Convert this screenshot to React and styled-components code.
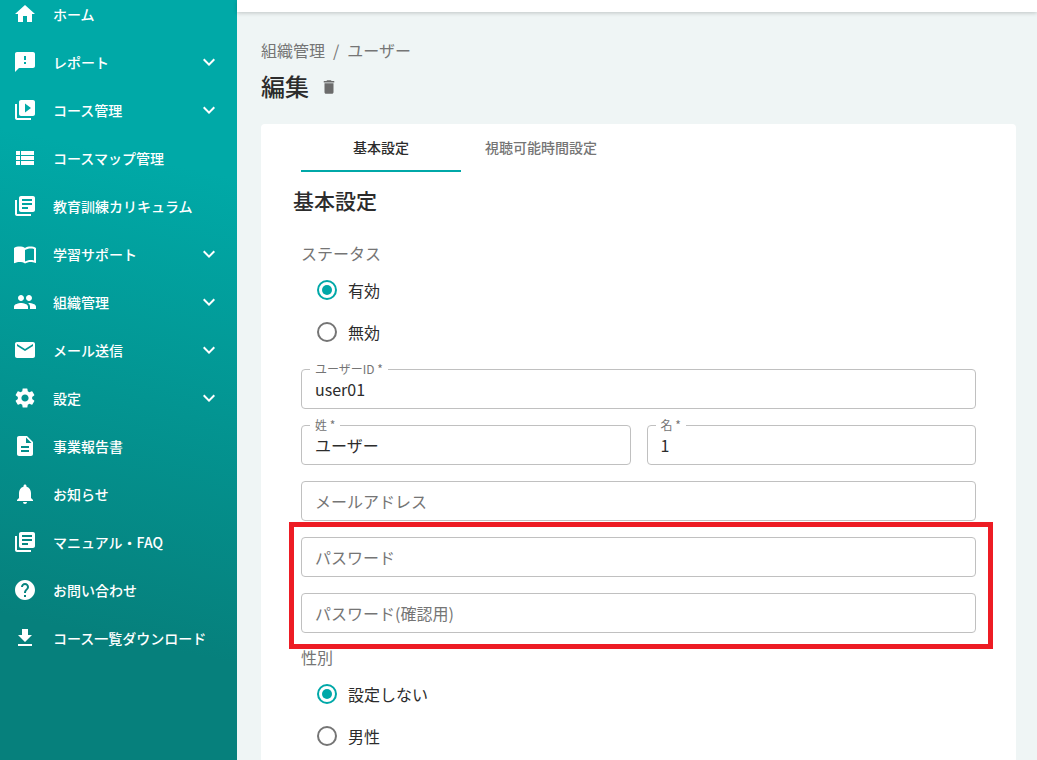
import React, { useState } from "react"
import styled, { createGlobalStyle } from "styled-components"
import {
  MdHome,
  MdFeedback,
  MdVideoLibrary,
  MdViewList,
  MdLibraryBooks,
  MdImportContacts,
  MdPeople,
  MdEmail,
  MdSettings,
  MdDescription,
  MdNotifications,
  MdHelp,
  MdGetApp,
  MdExpandMore,
  MdDelete,
} from "react-icons/md"

const navItems = [
  { label: "ホーム", icon: MdHome },
  { label: "レポート", icon: MdFeedback, expandable: true },
  { label: "コース管理", icon: MdVideoLibrary, expandable: true },
  { label: "コースマップ管理", icon: MdViewList },
  { label: "教育訓練カリキュラム", icon: MdLibraryBooks },
  { label: "学習サポート", icon: MdImportContacts, expandable: true },
  { label: "組織管理", icon: MdPeople, expandable: true },
  { label: "メール送信", icon: MdEmail, expandable: true },
  { label: "設定", icon: MdSettings, expandable: true },
  { label: "事業報告書", icon: MdDescription },
  { label: "お知らせ", icon: MdNotifications },
  { label: "マニュアル・FAQ", icon: MdLibraryBooks },
  { label: "お問い合わせ", icon: MdHelp },
  { label: "コース一覧ダウンロード", icon: MdGetApp },
]

const tabs = ["基本設定", "視聴可能時間設定"]

const NavItem = ({ label, icon: Icon, expandable }) => {
  const content = (
    <>
      <Icon size={24} />
      <NavLabel>{label}</NavLabel>
      {expandable && <MdExpandMore size={24} />}
    </>
  )

  return (
    <li>
      {expandable
        ? <NavRow as="button" type="button">{content}</NavRow>
        : <NavRow href="#">{content}</NavRow>}
    </li>
  )
}

const TextField = ({ id, label, type = "text", required, value, onChange }) => (
  <FieldWrapper>
    <FieldInput
      id={id}
      type={type}
      value={value}
      autoComplete="off"
      onChange={(e) => onChange(id, e.target.value)}
    />
    <FieldLabel htmlFor={id} $shrink={value !== ""}>
      {label}{required && " *"}
    </FieldLabel>
  </FieldWrapper>
)

const RadioField = ({ name, legend, options, value, onChange }) => (
  <RadioGroup>
    <RadioLegend>{legend}</RadioLegend>
    {options.map((option) => (
      <RadioLabel key={option}>
        <Radio
          type="radio"
          name={name}
          checked={value === option}
          onChange={() => onChange(name, option)}
        />
        {option}
      </RadioLabel>
    ))}
  </RadioGroup>
)

const App = () => {
  const [activeTab, setActiveTab] = useState(tabs[0])
  const [user, setUser] = useState({
    status: "有効",
    userId: "user01",
    lastName: "ユーザー",
    firstName: "1",
    email: "",
    password: "",
    passwordConfirm: "",
    gender: "設定しない",
  })

  const update = (key, value) => setUser({ ...user, [key]: value })

  return (
    <PageWrapper>
      <GlobalStyle />
      <Sidebar>
        <NavList>
          {navItems.map((item) => <NavItem key={item.label} {...item} />)}
        </NavList>
      </Sidebar>
      <Content>
        <TopBar />
        <Main>
          <Breadcrumbs>
            <BreadcrumbLink href="#">組織管理</BreadcrumbLink>
            <span>/</span>
            <BreadcrumbLink href="#">ユーザー</BreadcrumbLink>
          </Breadcrumbs>
          <TitleRow>
            <Title>編集</Title>
            <DeleteButton type="button" aria-label="削除">
              <MdDelete size={18} />
            </DeleteButton>
          </TitleRow>
          <Card>
            <TabList role="tablist">
              {tabs.map((tab) => (
                <Tab
                  key={tab}
                  type="button"
                  role="tab"
                  aria-selected={tab === activeTab}
                  $active={tab === activeTab}
                  onClick={() => setActiveTab(tab)}
                >
                  {tab}
                </Tab>
              ))}
            </TabList>
            <SectionTitle>基本設定</SectionTitle>
            <Form>
              <RadioField
                name="status"
                legend="ステータス"
                options={["有効", "無効"]}
                value={user.status}
                onChange={update}
              />
              <FieldStack>
                <TextField id="userId" label="ユーザーID" required value={user.userId} onChange={update} />
                <FieldRow>
                  <TextField id="lastName" label="姓" required value={user.lastName} onChange={update} />
                  <TextField id="firstName" label="名" required value={user.firstName} onChange={update} />
                </FieldRow>
                <TextField id="email" label="メールアドレス" value={user.email} onChange={update} />
                <HighlightedFields>
                  <TextField id="password" type="password" label="パスワード" value={user.password} onChange={update} />
                  <TextField id="passwordConfirm" type="password" label="パスワード(確認用)" value={user.passwordConfirm} onChange={update} />
                </HighlightedFields>
              </FieldStack>
              <RadioField
                name="gender"
                legend="性別"
                options={["設定しない", "男性"]}
                value={user.gender}
                onChange={update}
              />
            </Form>
          </Card>
        </Main>
      </Content>
    </PageWrapper>
  )
}

export default App


const GlobalStyle = createGlobalStyle`
  * {
    box-sizing: border-box;
  }

  body {
    margin: 0;
    color: #2c2c2c;
    font-family: "Noto Sans CJK JP", "Noto Sans", sans-serif;
    font-size: 16px;
    line-height: 24px;
  }

  button,
  input {
    font-family: inherit;
  }
`

const PageWrapper = styled.div`
  display: flex;
  min-height: 100vh;
`

const Sidebar = styled.nav`
  flex: 0 0 237px;
  color: #fff;
  background: linear-gradient(192deg, #00a9a7 22%, #06807c 82%);
`

const NavList = styled.ul`
  display: flex;
  flex-direction: column;
  gap: 20px;
  margin: 0;
  padding: 0;
  list-style: none;
`

const NavRow = styled.a`
  display: flex;
  align-items: center;
  gap: 16px;
  width: 100%;
  height: 28px;
  padding: 0 16px 0 13px;
  border: 0;
  background: none;
  color: inherit;
  font-size: 14px;
  font-weight: 500;
  line-height: 20px;
  text-align: left;
  text-decoration: none;
  cursor: pointer;

  svg {
    flex: none;
  }
`

const NavLabel = styled.span`
  flex: 1;
  white-space: nowrap;
`

const Content = styled.div`
  display: flex;
  flex: 1;
  flex-direction: column;
  min-width: 0;
  background: #eff5f5;
`

const TopBar = styled.header`
  height: 12px;
  background: #fff;
  box-shadow: 0 1px 4px rgba(0, 0, 0, 0.2);
`

const Main = styled.main`
  display: flex;
  flex: 1;
  flex-direction: column;
  padding: 26px 21px 0 24px;
`

const Breadcrumbs = styled.nav`
  display: flex;
  gap: 8px;
  color: #757575;
`

const BreadcrumbLink = styled.a`
  color: inherit;
  text-decoration: none;
`

const TitleRow = styled.div`
  display: flex;
  align-items: center;
  gap: 11px;
  margin: 6px 0 20px;
`

const Title = styled.h1`
  margin: 0;
  font-size: 24px;
  font-weight: 500;
  line-height: 36px;
`

const DeleteButton = styled.button`
  display: flex;
  padding: 2px 0 0;
  border: 0;
  background: none;
  color: #6b6b6b;
  cursor: pointer;
`

const Card = styled.section`
  flex: 1;
  border-radius: 4px 4px 0 0;
  background: #fff;
`

const TabList = styled.div`
  display: flex;
  padding: 0 40px;
`

const Tab = styled.button`
  min-width: 160px;
  height: 48px;
  padding: 0 12px;
  border: 0;
  border-bottom: 2px solid ${({ $active }) => ($active ? "#00a8a8" : "transparent")};
  background: none;
  color: ${({ $active }) => ($active ? "#2c2c2c" : "#757575")};
  font-size: 14px;
  font-weight: 500;
  line-height: 20px;
  cursor: pointer;
`

const SectionTitle = styled.h2`
  margin: 12px 32px 25px;
  font-size: 21px;
  font-weight: 500;
  line-height: 32px;
`

const Form = styled.form`
  padding: 0 40px;
`

const RadioGroup = styled.fieldset`
  margin: 0;
  padding: 0;
  border: 0;
`

const RadioLegend = styled.legend`
  margin-bottom: 4px;
  padding: 0;
  color: #757575;
`

const RadioLabel = styled.label`
  display: flex;
  align-items: center;
  gap: 11px;
  height: 42px;
  padding-left: 16px;
`

const Radio = styled.input`
  display: grid;
  place-content: center;
  width: 20px;
  height: 20px;
  margin: 0;
  border: 2px solid #757575;
  border-radius: 50%;
  appearance: none;

  &:checked {
    border-color: #00a8a8;
  }

  &:checked::before {
    content: "";
    width: 10px;
    height: 10px;
    border-radius: 50%;
    background: #00a8a8;
  }
`

const FieldStack = styled.div`
  display: flex;
  flex-direction: column;
  gap: 16px;
  margin: 16px 0 12px;
`

const FieldRow = styled.div`
  display: flex;
  gap: 16px;
`

const FieldWrapper = styled.div`
  position: relative;
  flex: 1;
`

const FieldInput = styled.input`
  display: block;
  width: 100%;
  height: 40px;
  padding: 0 13px;
  border: 1px solid #c0c0c0;
  border-radius: 4px;
  background: transparent;
  color: #2c2c2c;
  font-size: 16px;
  outline: none;

  &:focus {
    border-color: #00a8a8;
  }
`

const FieldLabel = styled.label`
  position: absolute;
  top: ${({ $shrink }) => ($shrink ? "-8px" : "8px")};
  left: 9px;
  padding: 0 5px;
  background: #fff;
  color: #757575;
  font-size: ${({ $shrink }) => ($shrink ? "12px" : "16px")};
  line-height: ${({ $shrink }) => ($shrink ? "16px" : "24px")};
  pointer-events: none;
`

// red frame drawn around the password fields
const HighlightedFields = styled.div`
  position: relative;
  display: flex;
  flex-direction: column;
  gap: 16px;

  &::after {
    content: "";
    position: absolute;
    inset: -15px -17px -16px -12px;
    border: 5px solid #ed1c24;
    pointer-events: none;
  }
`
